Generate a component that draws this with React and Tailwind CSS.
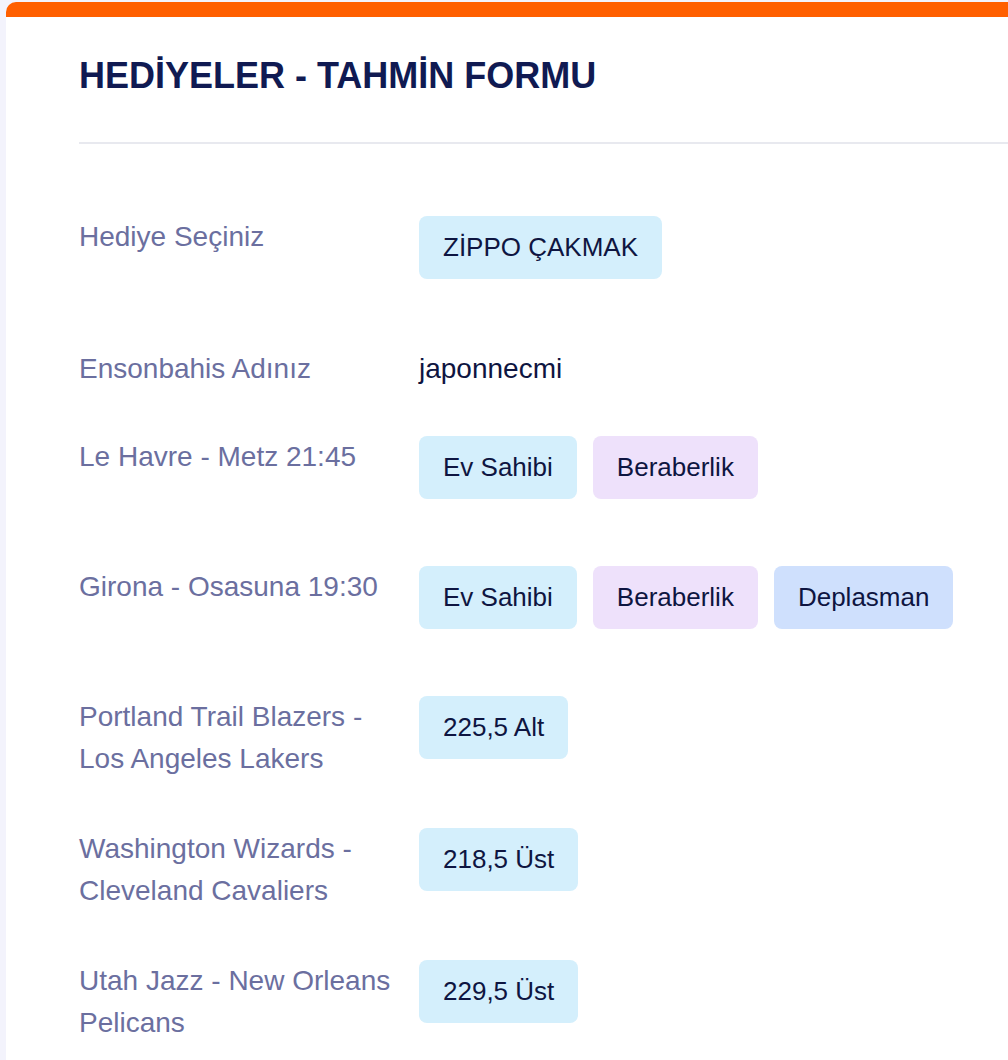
import React from "react";

const choiceColors = {
  home: "bg-[#d4effc]",
  draw: "bg-[#eee1fb]",
  away: "bg-[#cfe0fd]",
};

function Choice({ label, tone = "home" }) {
  return (
    <div className={`${choiceColors[tone]} rounded-lg px-6 py-3 text-[26px] leading-[39px] text-[#0e1541]`}>
      {label}
    </div>
  );
}

function Row({ label, children, spacing }) {
  return (
    <div className={`flex items-start ${spacing}`}>
      <div className="w-[340px] shrink-0 pr-6 text-[28px] leading-[42px] text-[#6b6f9f]">
        {label}
      </div>
      <div className="flex gap-4">{children}</div>
    </div>
  );
}

export default function App() {
  return (
    <div className="w-[1008px] h-[1060px] overflow-hidden bg-[#f3f3fc] pt-[2px] pl-[6px] font-['Liberation_Sans',Arial,sans-serif]">
      <div className="w-[1100px] h-[1200px] bg-white rounded-tl-[10px] overflow-hidden">
        {/* Top accent */}
        <div className="h-[15px] bg-[#ff5f00]" />

        <div className="pl-[73px] pt-[32px]">
          <h1 className="text-[36px] leading-[54px] font-bold text-[#101a52]">
            HEDİYELER - TAHMİN FORMU
          </h1>
          <div className="mt-[39px] h-[2px] bg-[#e8e9ef]" />

          {/* Form */}
          <div className="pt-[72px]">
            <Row label="Hediye Seçiniz" spacing="pb-[69px]">
              <Choice label="ZİPPO ÇAKMAK" />
            </Row>

            <Row label="Ensonbahis Adınız" spacing="pb-[46px]">
              <span className="text-[28px] leading-[42px] text-[#0e1541]">japonnecmi</span>
            </Row>

            <Row label="Le Havre - Metz 21:45" spacing="pb-[67px]">
              <Choice label="Ev Sahibi" />
              <Choice label="Beraberlik" tone="draw" />
            </Row>

            <Row label="Girona - Osasuna 19:30" spacing="pb-[67px]">
              <Choice label="Ev Sahibi" />
              <Choice label="Beraberlik" tone="draw" />
              <Choice label="Deplasman" tone="away" />
            </Row>

            <Row label="Portland Trail Blazers - Los Angeles Lakers" spacing="pb-[48px]">
              <Choice label="225,5 Alt" />
            </Row>

            <Row label="Washington Wizards - Cleveland Cavaliers" spacing="pb-[48px]">
              <Choice label="218,5 Üst" />
            </Row>

            <Row label="Utah Jazz - New Orleans Pelicans" spacing="pb-[48px]">
              <Choice label="229,5 Üst" />
            </Row>
          </div>
        </div>
      </div>
    </div>
  );
}
